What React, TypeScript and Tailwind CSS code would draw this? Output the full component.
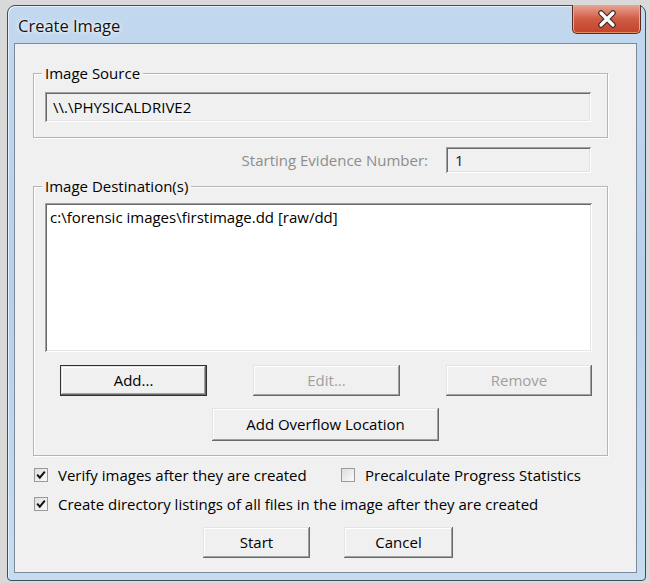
import React from "react";

const raised =
  "shadow-[inset_-1px_-1px_0_#696969,inset_1px_1px_0_#e3e3e3,inset_-2px_-2px_0_#a0a0a0,inset_2px_2px_0_#ffffff]";
const sunken =
  "shadow-[inset_1px_1px_0_#a0a0a0,inset_-1px_-1px_0_#ffffff,inset_2px_2px_0_#696969,inset_-2px_-2px_0_#e3e3e3]";

function Btn({
  label,
  w,
  h = "h-[31px]",
  disabled = false,
  isDefault = false,
  className = "",
}: {
  label: string;
  w: string;
  h?: string;
  disabled?: boolean;
  isDefault?: boolean;
  className?: string;
}) {
  return (
    <button
      className={`${w} ${h} ${className} shrink-0 bg-[#f0f0f0] flex items-center justify-center ${
        isDefault ? "border border-[#303030]" : ""
      } ${raised} ${disabled ? "text-[#a0a0a0]" : "text-black"}`}
    >
      {label}
    </button>
  );
}

function Check({ checked }: { checked: boolean }) {
  return (
    <span className="w-[14px] h-[14px] shrink-0 border border-[#9a9a9a] bg-gradient-to-br from-[#dedede] to-[#fbfbfb] flex items-center justify-center">
      {checked && (
        <svg width="10" height="10" viewBox="0 0 10 10">
          <path d="M1.2 4.6 L3.8 7.6 L8.8 1.6" fill="none" stroke="#111" strokeWidth="2" />
        </svg>
      )}
    </span>
  );
}

function GroupLabel({ text }: { text: string }) {
  return (
    <div className="-mt-[11px] ml-[8px] px-[3px] bg-[#f0f0f0] w-fit h-[20px] leading-[20px] text-black">
      {text}
    </div>
  );
}

export default function App() {
  return (
    <div className="w-[650px] h-[583px] bg-[#d9d9d9] overflow-hidden pt-[5px] pl-[7px] font-['Open_Sans',sans-serif] text-[15px]">
      <div className="w-[639px] h-[576px] rounded-t-[8px] rounded-b-[4px] border border-[#3d4f63] bg-gradient-to-b from-[#c2d8ef] via-[#b6d0ec] to-[#c6dcf1] flex flex-col shadow-[inset_1px_1px_0_#e6f0fa]">
        {/* Title bar */}
        <div className="h-[37px] flex justify-between shrink-0">
          <div className="pl-[10px] pt-[8px] text-[16.5px] leading-[24px] text-[#111] [text-shadow:0_0_6px_#ffffff,0_0_2px_#ffffff]">
            Create Image
          </div>
          <div className="-mt-[1px] mr-[4px] w-[69px] h-[29px] rounded-b-[5px] border border-[#5a2a25] border-t-0 bg-gradient-to-b from-[#e7a595] via-[#cf5b43] to-[#c4422a] flex items-center justify-center shadow-[inset_0_-1px_0_#e58b62,inset_1px_0_0_#e8a89a,inset_-1px_0_0_#e8a89a]">
            <svg width="22" height="18" viewBox="0 0 22 18">
              <path
                d="M5 3 L17 15 M17 3 L5 15"
                stroke="#3b2a2a"
                strokeWidth="5.5"
                strokeLinecap="round"
              />
              <path
                d="M5 3 L17 15 M17 3 L5 15"
                stroke="#ffffff"
                strokeWidth="3.2"
                strokeLinecap="round"
              />
            </svg>
          </div>
        </div>

        {/* Client area */}
        <div className="ml-[6px] w-[623px] h-[530px] border border-[#7c8a99] bg-[#f0f0f0] flex flex-col">
          {/* Image Source group */}
          <div className="ml-[18px] mt-[29px] w-[575px] border border-[#b5b5b5] shadow-[inset_1px_1px_0_#ffffff,1px_1px_0_#ffffff] flex flex-col pb-[15px]">
            <GroupLabel text="Image Source" />
            <div
              className={`ml-[11px] mt-[9px] w-[546px] h-[30px] bg-[#f0f0f0] ${sunken} flex items-center pl-[8px] text-black`}
            >
              \\.\PHYSICALDRIVE2
            </div>
          </div>

          {/* Starting evidence number */}
          <div className="mt-[9px] flex items-center justify-end pr-[45px]">
            <span className="text-[#8d8d8d] mr-[18px]">Starting Evidence Number:</span>
            <div
              className={`w-[145px] h-[26px] bg-[#f0f0f0] ${sunken} flex items-center pl-[9px] text-[#222]`}
            >
              1
            </div>
          </div>

          {/* Image Destination group */}
          <div className="ml-[18px] mt-[13px] w-[575px] border border-[#b5b5b5] shadow-[inset_1px_1px_0_#ffffff,1px_1px_0_#ffffff] flex flex-col pb-[14px]">
            <GroupLabel text="Image Destination(s)" />
            <div
              className={`ml-[11px] mt-[7px] w-[547px] h-[149px] bg-white ${sunken} pl-[5px] pt-[3px] text-black`}
            >
              c:\forensic images\firstimage.dd [raw/dd]
            </div>
            <div className="mt-[13px] ml-[26px] flex gap-[46px]">
              <Btn label="Add..." w="w-[147px]" isDefault />
              <Btn label="Edit..." w="w-[147px]" disabled />
              <Btn label="Remove" w="w-[146px]" disabled />
            </div>
            <div className="mt-[12px] ml-[178px] flex">
              <Btn label="Add Overflow Location" w="w-[227px]" h="h-[33px]" />
            </div>
          </div>

          {/* Checkboxes */}
          <div className="mt-[12px] ml-[19px] h-[14px] flex items-center">
            <Check checked />
            <span className="ml-[10px] w-[283px] text-black whitespace-nowrap">
              Verify images after they are created
            </span>
            <Check checked={false} />
            <span className="ml-[10px] text-black whitespace-nowrap">Precalculate Progress Statistics</span>
          </div>
          <div className="mt-[15px] ml-[19px] h-[14px] flex items-center">
            <Check checked />
            <span className="ml-[10px] text-black whitespace-nowrap">
              Create directory listings of all files in the image after they are created
            </span>
          </div>

          {/* Start / Cancel */}
          <div className="mt-[16px] ml-[188px] flex gap-[34px]">
            <Btn label="Start" w="w-[107px]" />
            <Btn label="Cancel" w="w-[109px]" />
          </div>
        </div>
      </div>
    </div>
  );
}
